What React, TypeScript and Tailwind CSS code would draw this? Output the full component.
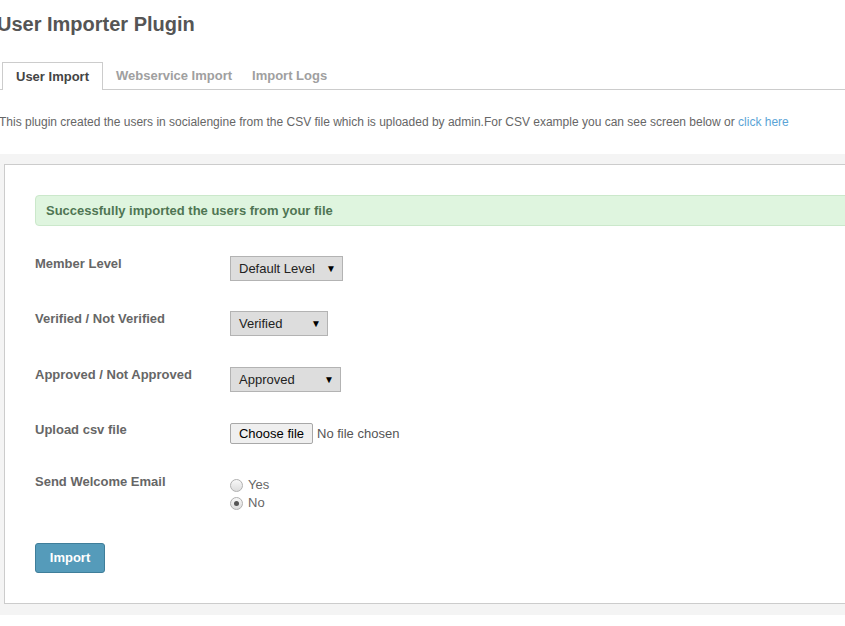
import React from "react"

const font = { fontFamily: '"Liberation Sans", Arial, Helvetica, sans-serif' }

function FakeSelect({ value, width }: { value: string; width: string }) {
  return (
    <div
      className={`${width} h-[25px] flex items-center justify-between border border-[#b3b3b3] bg-[#dddddd] pl-[8px] pr-[6px] text-[13px] text-[#222]`}
    >
      <span>{value}</span>
      <span className="text-[10px] leading-none text-black">▼</span>
    </div>
  )
}

function Radio({ label, checked }: { label: string; checked?: boolean }) {
  return (
    <div className="flex h-[18px] items-center gap-[5px]">
      <span className="flex h-[13px] w-[13px] items-center justify-center rounded-full border border-[#b0b0b0] bg-gradient-to-b from-[#f8f8f8] to-[#dcdcdc]">
        {checked && <span className="h-[5px] w-[5px] rounded-full bg-[#555]" />}
      </span>
      <span className="text-[13px] text-[#666]">{label}</span>
    </div>
  )
}

function FormRow({ label, children, className = "" }: { label: string; children: React.ReactNode; className?: string }) {
  return (
    <div className={`flex ${className}`}>
      <div className="w-[195px] shrink-0 text-[13px] font-bold leading-[16px] text-[#666]">{label}</div>
      <div>{children}</div>
    </div>
  )
}

export default function App() {
  return (
    <div className="w-[845px] h-[626px] overflow-hidden bg-white" style={font}>
      {/* Title */}
      <h1 className="ml-[-3px] pt-[12px] text-[20px] font-bold leading-[24px] text-[#555]">User Importer Plugin</h1>

      {/* Tabs */}
      <div className="mt-[26px] flex h-[28px] items-end gap-[6px] border-b border-[#cccccc]">
        <div className="ml-[2px] -mb-px flex h-[28px] items-center border border-b-0 border-[#cccccc] bg-white px-[13px] text-[13px] font-bold text-[#444]">
          User Import
        </div>
        <div className="flex h-[27px] items-center px-[7px] text-[13px] font-bold text-[#a0a0a0]">Webservice Import</div>
        <div className="flex h-[27px] items-center px-[7px] text-[13px] font-bold text-[#a0a0a0]">Import Logs</div>
      </div>

      {/* Description */}
      <p className="ml-[-1px] mt-[24px] text-[12px] leading-[16px] text-[#666]">
        This plugin created the users in socialengine from the CSV file which is uploaded by admin.For CSV example you can see screen below or{" "}
        <a className="text-[#5ba4d6]">click here</a>
      </p>

      {/* Panel */}
      <div className="mt-[24px] w-[900px] bg-[#f4f4f4] pb-[11px] pl-[4px] pt-[10px]">
        <div className="border border-[#cccccc] bg-white pb-[30px] pl-[30px] pt-[30px]">
          <div className="flex h-[31px] items-center rounded-[4px] border border-[#cbe8cb] bg-[#dff5df] pl-[10px] text-[13px] font-bold text-[#4f7553]">
            Successfully imported the users from your file
          </div>

          <FormRow label="Member Level" className="mt-[30px]">
            <FakeSelect value="Default Level" width="w-[113px]" />
          </FormRow>

          <FormRow label="Verified / Not Verified" className="mt-[30px]">
            <FakeSelect value="Verified" width="w-[98px]" />
          </FormRow>

          <FormRow label="Approved / Not Approved" className="mt-[31px]">
            <FakeSelect value="Approved" width="w-[111px]" />
          </FormRow>

          <FormRow label="Upload csv file" className="mt-[30px]">
            <div className="mt-[1px] flex items-center gap-[4px]">
              <div className="flex h-[21px] w-[83px] items-center justify-center rounded-[2px] border border-[#a8a8a8] bg-[#efefef] text-[13px] text-black">
                Choose file
              </div>
              <span className="text-[13px] text-[#555]">No file chosen</span>
            </div>
          </FormRow>

          <FormRow label="Send Welcome Email" className="mt-[30px]">
            <div className="mt-[2px]">
              <Radio label="Yes" />
              <Radio label="No" checked />
            </div>
          </FormRow>

          <button className="mt-[31px] h-[30px] w-[70px] rounded-[3px] border border-[#3f7e9a] bg-[#559bba] text-[13px] font-bold text-white">
            Import
          </button>
        </div>
      </div>
    </div>
  )
}
